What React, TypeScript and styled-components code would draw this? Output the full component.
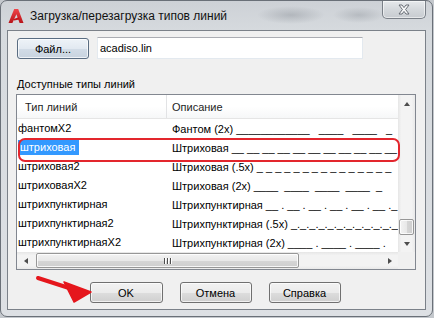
import React from 'react';
import styled, { createGlobalStyle } from 'styled-components';

const GlobalStyle = createGlobalStyle`
  html, body {
    margin: 0;
    padding: 0;
  }
  body {
    width: 434px;
    height: 318px;
    overflow: hidden;
    background: #c4c8cd;
    font-family: "Liberation Sans", Arial, sans-serif;
    font-size: 11px;
    color: #000;
  }
`;

const Window = styled.div`
  position: relative;
  box-sizing: border-box;
  width: 433px;
  height: 317px;
  display: flex;
  flex-direction: column;
  padding: 0 6px 6px 6px;
  border: 1px solid #6a7078;
  border-radius: 7px;
  background:
    radial-gradient(ellipse 34px 9px at 290px 14px, rgba(120, 126, 134, 0.35), transparent),
    radial-gradient(ellipse 26px 8px at 358px 14px, rgba(120, 126, 134, 0.3), transparent),
    linear-gradient(180deg, #cdd1d6 0px, #d6dade 30px, #dde0e4 100%);
`;

const TitleBar = styled.div`
  height: 29px;
  display: flex;
  align-items: flex-start;
  padding-left: 1px;
`;

const AppIcon = styled.svg`
  width: 16px;
  height: 16px;
  margin-top: 7px;
  flex: none;
`;

const Title = styled.div`
  margin-left: 6px;
  margin-top: 7px;
  line-height: 16px;
  font-size: 12px;
  color: #111;
`;

const CloseButton = styled.div`
  margin-left: auto;
  width: 44px;
  height: 18px;
  box-sizing: border-box;
  display: flex;
  align-items: center;
  justify-content: center;
  border: 1px solid #7a8088;
  border-top: none;
  border-radius: 0 0 5px 5px;
  background: linear-gradient(180deg, #e6e9ec 0%, #d4d8dc 50%, #c7cbd0 100%);
  box-shadow: inset 0 0 0 1px rgba(255, 255, 255, 0.55);
`;

const Client = styled.div`
  flex: 1;
  box-sizing: border-box;
  display: flex;
  flex-direction: column;
  padding: 6px 9px 0 8px;
  background: #f0f0f0;
  border: 1px solid #7b8189;
`;

const FileRow = styled.div`
  display: flex;
  align-items: flex-start;
  gap: 8px;
  padding-left: 1px;
`;

const Button = styled.div<{ $tint?: boolean; $w?: number }>`
  box-sizing: border-box;
  width: ${({ $w }) => $w ?? 72}px;
  height: 21px;
  display: flex;
  align-items: center;
  justify-content: center;
  border: 1px solid ${({ $tint }) => ($tint ? '#5a6d82' : '#707070')};
  border-radius: 3px;
  background: ${({ $tint }) =>
    $tint
      ? 'linear-gradient(180deg, #eef3f8 0%, #e2e9f1 50%, #d2dce7 51%, #c8d3df 100%)'
      : 'linear-gradient(180deg, #f2f2f2 0%, #ebebeb 50%, #dddddd 51%, #cfcfcf 100%)'};
  box-shadow: inset 0 0 0 1px rgba(255, 255, 255, 0.7);
  color: #000;
`;

const FileButton = styled(Button)`
  margin-top: 1px;
`;

const TextInput = styled.div`
  box-sizing: border-box;
  width: 266px;
  height: 22px;
  display: flex;
  align-items: center;
  padding-left: 2px;
  background: #fff;
  border: 1px solid #e3e9ef;
  border-top-color: #abadb3;
`;

const GroupLabel = styled.div`
  margin-top: 18px;
  padding-left: 1px;
  line-height: 14px;
  height: 14px;
`;

const ListBox = styled.div`
  position: relative;
  margin-top: 3px;
  box-sizing: border-box;
  width: 400px;
  height: 176px;
  border: 1px solid #828790;
  background: #fff;
  display: grid;
  grid-template-columns: 1fr 17px;
  grid-template-rows: 1fr 17px;
`;

const ListBody = styled.div`
  overflow: hidden;
  display: flex;
  flex-direction: column;
`;

const Header = styled.div`
  flex: none;
  height: 24px;
  box-sizing: border-box;
  display: grid;
  grid-template-columns: 149px 1fr;
  align-items: center;
  background: linear-gradient(180deg, #ffffff 0%, #ffffff 50%, #f6f7f8 100%);
  border-bottom: 1px solid #e5e5e5;
  white-space: nowrap;
`;

const HeaderCell = styled.div<{ $first?: boolean }>`
  height: 100%;
  display: flex;
  align-items: center;
  padding-left: ${({ $first }) => ($first ? 8 : 5)}px;
  border-left: ${({ $first }) => ($first ? 'none' : '1px solid #e2e3e5')};
  color: #1e1e1e;
`;

const Row = styled.div`
  flex: none;
  height: 19px;
  display: grid;
  grid-template-columns: 155px 1fr;
  align-items: center;
  white-space: nowrap;
`;

const NameCell = styled.div`
  padding-left: 1px;
  display: flex;
  align-items: center;
`;

const NameText = styled.span<{ $selected?: boolean }>`
  line-height: 15px;
  padding: ${({ $selected }) => ($selected ? '0 4px 0 2px' : '0')};
  background: ${({ $selected }) => ($selected ? '#3399ff' : 'transparent')};
  color: ${({ $selected }) => ($selected ? '#fff' : '#000')};
`;

const DescCell = styled.div`
  overflow: hidden;
  white-space: pre;
`;

const VScroll = styled.div`
  display: flex;
  flex-direction: column;
  background: linear-gradient(90deg, #e6e6e6 0%, #f3f3f3 20%, #f3f3f3 80%, #e9e9e9 100%);
`;

const HScroll = styled.div`
  display: flex;
  background: linear-gradient(180deg, #e6e6e6 0%, #f3f3f3 20%, #f3f3f3 80%, #e9e9e9 100%);
`;

const Corner = styled.div`
  background: #f0f0f0;
`;

const ArrowButton = styled.div`
  flex: none;
  width: 17px;
  height: 17px;
  display: flex;
  align-items: center;
  justify-content: center;
`;

const Triangle = styled.div<{ $dir: 'up' | 'down' | 'left' | 'right' }>`
  width: 0;
  height: 0;
  border-style: solid;
  border-color: transparent;
  ${({ $dir }) =>
    $dir === 'up'
      ? 'border-width: 0 3.5px 4px 3.5px; border-bottom-color: #4d4d4d;'
      : $dir === 'down'
      ? 'border-width: 4px 3.5px 0 3.5px; border-top-color: #4d4d4d;'
      : $dir === 'left'
      ? 'border-width: 3.5px 4px 3.5px 0; border-right-color: #4d4d4d;'
      : 'border-width: 3.5px 0 3.5px 4px; border-left-color: #4d4d4d;'}
`;

const Track = styled.div<{ $vertical?: boolean }>`
  flex: 1;
  display: flex;
  flex-direction: ${({ $vertical }) => ($vertical ? 'column' : 'row')};
`;

const Thumb = styled.div<{ $vertical?: boolean; $offset: number; $size: number }>`
  box-sizing: border-box;
  display: flex;
  align-items: center;
  justify-content: center;
  gap: 2px;
  border: 1px solid #979797;
  border-radius: 2px;
  ${({ $vertical, $offset, $size }) =>
    $vertical
      ? `margin: ${$offset}px 1px 0 1px; height: ${$size}px;
         background: linear-gradient(90deg, #f3f3f3 0%, #e8e8e8 50%, #d6d6d6 51%, #cecece 100%);`
      : `margin: 1px 0 1px ${$offset}px; width: ${$size}px;
         background: linear-gradient(180deg, #f3f3f3 0%, #e8e8e8 50%, #d6d6d6 51%, #cecece 100%);`}
  box-shadow: inset 0 0 0 1px rgba(255, 255, 255, 0.8);
`;

const Grip = styled.span`
  width: 1px;
  height: 6px;
  background: #4d4d4d;
  box-shadow: 1px 0 0 #fff;
`;

const Highlight = styled.div`
  position: absolute;
  left: 1px;
  top: 43px;
  width: 382px;
  height: 24px;
  box-sizing: border-box;
  border: 2px solid #e3262d;
  border-radius: 7px;
  pointer-events: none;
`;

const ButtonRow = styled.div`
  margin-top: 12px;
  display: flex;
  justify-content: center;
  gap: 17px;
  padding-right: 2px;
`;

const Pointer = styled.svg`
  position: absolute;
  left: 30px;
  top: 268px;
  width: 65px;
  height: 40px;
  pointer-events: none;
`;

const rows = [
  { name: 'фантомX2', desc: 'Фантом (2x) ____________   ____   ____   _' },
  { name: 'штриховая', desc: 'Штриховая __ __ __ __ __ __ __ __ __ __ __', selected: true },
  { name: 'штриховая2', desc: 'Штриховая (.5x) _ _ _ _ _ _ _ _ _ _ _ _ _ _ _' },
  { name: 'штриховаяX2', desc: 'Штриховая (2x) ____  ____  ____  ____  _' },
  { name: 'штрихпунктирная', desc: 'Штрихпунктирная __ . __ . __ . __ . __ . __ ._' },
  { name: 'штрихпунктирная2', desc: 'Штрихпунктирная (.5x) _._._._._._._._._._._._' },
  { name: 'штрихпунктирнаяX2', desc: 'Штрихпунктирная (2x) ____ . ____ . ____ .' },
];

export default function App() {
  return (
    <>
      <GlobalStyle />
      <Window>
        <TitleBar>
          <AppIcon viewBox="0 0 16 16">
            <defs>
              <linearGradient id="acadRed" x1="0" y1="0" x2="0" y2="1">
                <stop offset="0" stopColor="#f0454a" />
                <stop offset="1" stopColor="#b8141a" />
              </linearGradient>
            </defs>
            <path d="M0.5 15 L6.2 1 L10.2 1 L15.5 15 L11.6 15 L8.4 6.2 L4.4 15 Z" fill="url(#acadRed)" />
            <path d="M5.2 11.2 L10.6 9.2 L11.4 11.6 L6.2 12.6 Z" fill="#c8161c" />
          </AppIcon>
          <Title>Загрузка/перезагрузка типов линий</Title>
          <CloseButton>
            <svg width="14" height="11" viewBox="0 0 14 11">
              <path
                d="M2 1 L5 1 L7 3.6 L9 1 L12 1 L8.6 5.5 L12 10 L9 10 L7 7.4 L5 10 L2 10 L5.4 5.5 Z"
                fill="#f7f8f9"
                stroke="#5b6169"
                strokeWidth="0.9"
                strokeLinejoin="round"
              />
            </svg>
          </CloseButton>
        </TitleBar>
        <Client>
          <FileRow>
            <FileButton $tint>Файл...</FileButton>
            <TextInput>acadiso.lin</TextInput>
          </FileRow>
          <GroupLabel>Доступные типы линий</GroupLabel>
          <ListBox>
            <ListBody>
              <Header>
                <HeaderCell $first>Тип линий</HeaderCell>
                <HeaderCell>Описание</HeaderCell>
              </Header>
              {rows.map((r) => (
                <Row key={r.name}>
                  <NameCell>
                    <NameText $selected={r.selected}>{r.name}</NameText>
                  </NameCell>
                  <DescCell>{r.desc}</DescCell>
                </Row>
              ))}
            </ListBody>
            <VScroll>
              <ArrowButton>
                <Triangle $dir="up" />
              </ArrowButton>
              <Track $vertical>
                <Thumb $vertical $offset={107} $size={16} />
              </Track>
              <ArrowButton>
                <Triangle $dir="down" />
              </ArrowButton>
            </VScroll>
            <HScroll>
              <ArrowButton>
                <Triangle $dir="left" />
              </ArrowButton>
              <Track>
                <Thumb $offset={2} $size={263}>
                  <Grip />
                  <Grip />
                  <Grip />
                </Thumb>
              </Track>
              <ArrowButton>
                <Triangle $dir="right" />
              </ArrowButton>
            </HScroll>
            <Corner />
            <Highlight />
          </ListBox>
          <ButtonRow>
            <Button $w={73}>OK</Button>
            <Button>Отмена</Button>
            <Button>Справка</Button>
          </ButtonRow>
        </Client>
        <Pointer viewBox="0 0 65 40">
          <path d="M7 9 L38 19" stroke="#e5161c" strokeWidth="4" strokeLinecap="round" />
          <path d="M33 13 L60 23 L43 33 Z" fill="#e5161c" stroke="#e5161c" strokeWidth="1.5" strokeLinejoin="round" />
        </Pointer>
      </Window>
    </>
  );
}
